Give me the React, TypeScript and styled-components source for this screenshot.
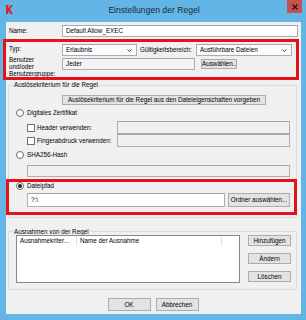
import React from "react";
import styled, { createGlobalStyle } from "styled-components";

const Global = createGlobalStyle`
  html, body { margin: 0; padding: 0; }
  body {
    font-family: "Liberation Sans", Arial, sans-serif;
    font-size: 6.3px;
    color: #000;
  }
  * { box-sizing: border-box; }
`;

const Window = styled.div`
  position: relative;
  width: 306px;
  height: 320px;
  background: #62b5e5;
  display: flex;
  flex-direction: column;
  padding: 0 5px 6px 6px;
  overflow: hidden;
`;

const TitleBar = styled.div`
  height: 22px;
  display: flex;
  align-items: flex-start;
  margin: 0 -5px 0 -6px;
`;

const Logo = styled.svg`
  width: 7px;
  height: 9px;
  margin: 5px 0 0 6px;
  flex: none;
`;

const Title = styled.div`
  flex: 1;
  text-align: center;
  font-size: 8.6px;
  line-height: 21px;
  color: #1e2a35;
  padding-left: 8px;
`;

const CloseButton = styled.div`
  width: 15px;
  height: 13px;
  margin-right: 4px;
  background: #c75050;
  display: flex;
  align-items: center;
  justify-content: center;
  flex: none;
`;

const Body = styled.div`
  flex: 1;
  background: #f0f0f0;
  display: flex;
  flex-direction: column;
  padding: 3px 3px 3px 2px;
`;

const Row = styled.div<{ $cols: string; $mt?: number; $mr?: number; $h?: number; $ml?: number }>`
  display: grid;
  grid-template-columns: ${(p) => p.$cols};
  align-items: start;
  margin-top: ${(p) => p.$mt ?? 0}px;
  margin-right: ${(p) => p.$mr ?? 0}px;
  margin-left: ${(p) => p.$ml ?? 0}px;
  height: ${(p) => (p.$h ? `${p.$h}px` : "auto")};
`;

const Label = styled.span<{ $lh?: number; $pl?: number }>`
  line-height: ${(p) => p.$lh ?? 12}px;
  padding-left: ${(p) => p.$pl ?? 0}px;
  white-space: nowrap;
`;

const StackLabel = styled.div`
  display: flex;
  flex-direction: column;
  line-height: 7px;
  white-space: nowrap;
`;

const TextBox = styled.div<{ $h?: number; $bg?: string; $mt?: number; $ml?: number }>`
  height: ${(p) => p.$h ?? 12}px;
  margin-top: ${(p) => p.$mt ?? 0}px;
  margin-left: ${(p) => p.$ml ?? 0}px;
  border: 1px solid #abadb3;
  border-top-color: #a3a6ae;
  background: ${(p) => p.$bg ?? "#fff"};
  padding: 0 3px;
  line-height: ${(p) => (p.$h ?? 12) - 2}px;
  white-space: nowrap;
  overflow: hidden;
`;

const SelectBox = styled(TextBox)`
  display: flex;
  align-items: center;
  justify-content: space-between;
  padding-right: 4px;
`;

const Chevron = styled.svg`
  width: 5px;
  height: 3px;
  flex: none;
`;

const Button = styled.div<{ $w: number; $h?: number; $mt?: number; $ml?: number }>`
  width: ${(p) => p.$w}px;
  height: ${(p) => p.$h ?? 11}px;
  margin-top: ${(p) => p.$mt ?? 0}px;
  margin-left: ${(p) => p.$ml ?? 0}px;
  border: 1px solid #acacac;
  background: #e3e3e3;
  text-align: center;
  line-height: ${(p) => (p.$h ?? 11) - 2}px;
  white-space: nowrap;
  overflow: hidden;
`;

const Group = styled.fieldset<{ $mt: number; $pb: number }>`
  margin: ${(p) => p.$mt}px 1px 0 0;
  padding: 0 6px ${(p) => p.$pb}px 4px;
  border: 1px solid #dcdcdc;
  display: flex;
  flex-direction: column;
  min-width: 0;
`;

const Legend = styled.legend<{ $lh: number }>`
  padding: 0 1px;
  line-height: ${(p) => p.$lh}px;
`;

const OptionRow = styled.div<{ $mt: number; $ml: number }>`
  display: flex;
  align-items: center;
  gap: 3px;
  height: 8px;
  margin-top: ${(p) => p.$mt}px;
  margin-left: ${(p) => p.$ml}px;
  line-height: 8px;
  white-space: nowrap;
`;

const Radio = styled.span<{ $checked?: boolean }>`
  width: 8px;
  height: 8px;
  border-radius: 50%;
  border: 1px solid #6f6f6f;
  background: #fff;
  display: flex;
  align-items: center;
  justify-content: center;
  flex: none;
  &::after {
    content: "";
    width: 4px;
    height: 4px;
    border-radius: 50%;
    background: ${(p) => (p.$checked ? "#222" : "transparent")};
  }
`;

const Check = styled.span`
  width: 8px;
  height: 8px;
  border: 1px solid #6f6f6f;
  background: #fff;
  flex: none;
`;

const CheckGrid = styled.div`
  display: grid;
  grid-template-columns: 90px 1fr;
  grid-auto-rows: 13px;
  margin: 4px 0 0 14px;
  align-items: center;
`;

const CheckLabel = styled.div`
  display: flex;
  align-items: center;
  gap: 2px;
  white-space: nowrap;
`;

const ExceptionArea = styled.div`
  display: grid;
  grid-template-columns: 224px 43px;
  column-gap: 8px;
  margin: 0 0 0 3px;
`;

const ListView = styled.div`
  height: 48px;
  border: 1px solid #828790;
  background: #fff;
`;

const ListHeader = styled.div`
  display: grid;
  grid-template-columns: 60px 145px 1fr;
  height: 10px;
  line-height: 10px;
`;

const HeaderCell = styled.div`
  border-right: 1px solid #e3e3e3;
  padding-left: 3px;
  white-space: nowrap;
  overflow: hidden;
`;

const SideButtons = styled.div`
  display: flex;
  flex-direction: column;
  gap: 7px;
`;

const Footer = styled.div`
  display: flex;
  justify-content: center;
  gap: 5px;
  margin-top: 8px;
`;

const Highlight = styled.div<{ $x: number; $y: number; $w: number; $h: number }>`
  position: absolute;
  left: ${(p) => p.$x}px;
  top: ${(p) => p.$y}px;
  width: ${(p) => p.$w}px;
  height: ${(p) => p.$h}px;
  border: 3px solid #e3131b;
  pointer-events: none;
`;

const Down = () => (
  <Chevron viewBox="0 0 5 3">
    <polyline points="0.5,0.5 2.5,2.5 4.5,0.5" fill="none" stroke="#444" strokeWidth="1" />
  </Chevron>
);

export default function App() {
  return (
    <>
      <Global />
      <Window>
        <TitleBar>
          <Logo viewBox="0 0 7 9">
            <polygon points="0,0 2.4,0 2.4,3.6 5,0 7,0 4,4.2 7,9 4.6,9 2.4,5.4 2.4,9 0,9" fill="#d8232a" />
          </Logo>
          <Title>Einstellungen der Regel</Title>
          <CloseButton>
            <svg width="6" height="6" viewBox="0 0 6 6">
              <path d="M0.5 0.5 L5.5 5.5 M5.5 0.5 L0.5 5.5" stroke="#2a1414" strokeWidth="1.4" />
            </svg>
          </CloseButton>
        </TitleBar>
        <Body>
          <Row $cols="54px 1fr" $h={12}>
            <Label $pl={1}>Name:</Label>
            <TextBox>Default Allow_EXEC</TextBox>
          </Row>
          <Row $cols="54px 75px 59px 1fr" $mt={7} $mr={6} $h={12}>
            <Label $lh={9} $pl={1}>Typ:</Label>
            <SelectBox $bg="#fbfbfb">
              Erlaubnis
              <Down />
            </SelectBox>
            <Label $pl={3}>Gültigkeitsbereich:</Label>
            <SelectBox $bg="#fbfbfb">
              Ausführbare Dateien
              <Down />
            </SelectBox>
          </Row>
          <Row $cols="54px 133px 36px" $h={21}>
            <StackLabel>
              <Label $lh={7} $pl={1}>Benutzer</Label>
              <Label $lh={7} $pl={1}>und/oder</Label>
              <Label $lh={7} $pl={1}>Benutzergruppe:</Label>
            </StackLabel>
            <TextBox $mt={2} $bg="#f3f3f3">Jeder</TextBox>
            <Button $w={36} $h={10} $mt={3} $ml={6}>Auswählen...</Button>
          </Row>

          <Group $mt={4} $pb={10}>
            <Legend $lh={8}>Auslösekriterium für die Regel</Legend>
            <Button $w={204} $h={10} $mt={6} $ml={49}>
              Auslösekriterium für die Regel aus den Dateieigenschaften vorgeben
            </Button>
            <OptionRow $mt={4} $ml={3}>
              <Radio />
              Digitales Zertifikat
            </OptionRow>
            <CheckGrid>
              <CheckLabel>
                <Check />
                Header verwenden:
              </CheckLabel>
              <TextBox $h={13} $bg="#f0f0f0" />
              <CheckLabel>
                <Check />
                Fingerabdruck verwenden:
              </CheckLabel>
              <TextBox $h={13} $bg="#f0f0f0" />
            </CheckGrid>
            <OptionRow $mt={4} $ml={3}>
              <Radio />
              SHA256-Hash
            </OptionRow>
            <TextBox $h={12} $mt={6} $ml={14} $bg="#f0f0f0" />
            <OptionRow $mt={5} $ml={3}>
              <Radio $checked />
              Dateipfad
            </OptionRow>
            <Row $cols="198px 1fr" $mt={3} $ml={14} $h={14}>
              <TextBox $h={14}>?:\</TextBox>
              <Button $w={62} $h={14} $ml={3}>Ordner auswählen...</Button>
            </Row>
          </Group>

          <Group $mt={10} $pb={6}>
            <Legend $lh={7}>Ausnahmen von der Regel</Legend>
            <ExceptionArea>
              <ListView>
                <ListHeader>
                  <HeaderCell>Ausnahmekriter...</HeaderCell>
                  <HeaderCell>Name der Ausnahme</HeaderCell>
                  <div />
                </ListHeader>
              </ListView>
              <SideButtons>
                <Button $w={43} $h={11}>Hinzufügen</Button>
                <Button $w={43} $h={11}>Ändern</Button>
                <Button $w={43} $h={11}>Löschen</Button>
              </SideButtons>
            </ExceptionArea>
          </Group>

          <Footer>
            <Button $w={43} $h={13}>OK</Button>
            <Button $w={43} $h={13}>Abbrechen</Button>
          </Footer>
        </Body>
        <Highlight $x={3} $y={39} $w={296} $h={41} />
        <Highlight $x={6} $y={179} $w={291} $h={36} />
      </Window>
    </>
  );
}
